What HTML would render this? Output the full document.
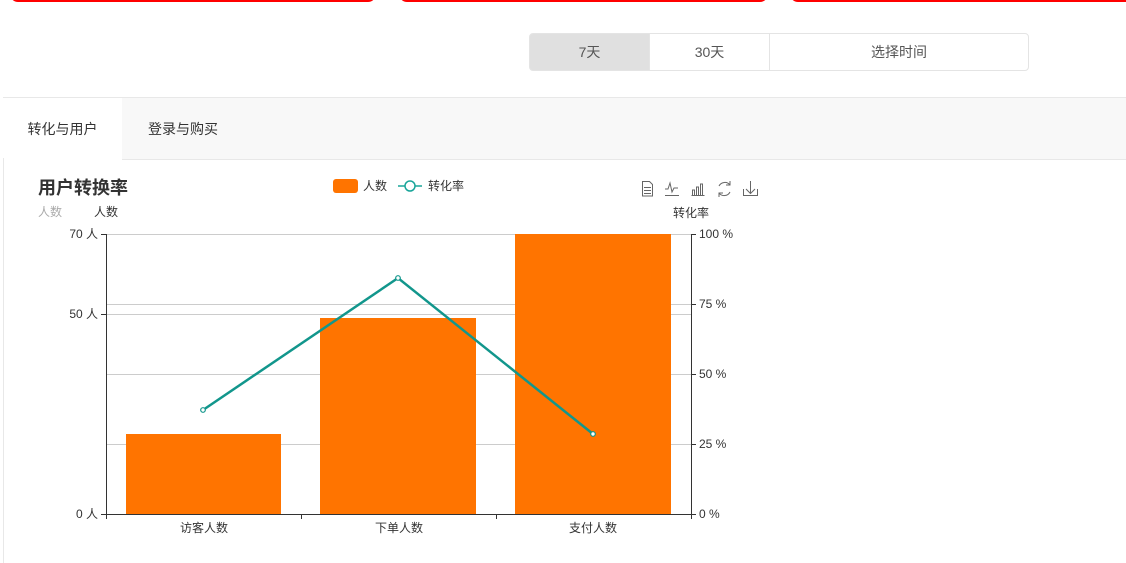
<!DOCTYPE html>
<html><head><meta charset="utf-8"><style>
body{margin:0;width:1126px;height:563px;overflow:hidden;background:#fff;font-family:"Liberation Sans","Noto Sans CJK SC",sans-serif;position:relative}
.card{position:absolute;top:-10px;height:12px;border-bottom:3px solid #f00;border-radius:0 0 8px 8px;box-sizing:border-box}
.seg{position:absolute;top:33px;height:38px;border:1px solid #e4e4e4;box-sizing:border-box;font-size:14px;color:#555;text-align:center;line-height:36px}
.tabs{position:absolute;left:3px;top:97px;right:0;height:61px;background:#f8f8f8;border-top:1px solid #e8e8e8;border-bottom:1px solid #e8e8e8}
.t{position:absolute;top:0;height:61px;line-height:63px;font-size:14px;color:#333;text-align:center}
svg text{font-family:"Liberation Sans","Noto Sans CJK SC",sans-serif}
</style></head><body>
<div class="card" style="left:10px;width:366px"></div>
<div class="card" style="left:399px;width:369px"></div>
<div class="card" style="left:790px;width:346px"></div>
<div class="seg" style="left:529px;width:121px;background:#e0e0e0;border-radius:4px 0 0 4px">7天</div>
<div class="seg" style="left:649px;width:121px">30天</div>
<div class="seg" style="left:769px;width:260px;border-radius:0 4px 4px 0">选择时间</div>
<div class="tabs">
<div class="t" style="left:0;width:119px;background:#fff;height:62px">转化与用户</div>
<div class="t" style="left:120px;width:120px">登录与购买</div>
</div>
<div style="position:absolute;left:3px;top:158px;width:1px;height:405px;background:#e8e8e8"></div>
<svg width="1126" height="563" style="position:absolute;left:0;top:0">
<text x="38" y="194" font-size="18" font-weight="bold" fill="#333">用户转换率</text>
<text x="38" y="216" font-size="12" fill="#aaa">人数</text>
<text x="94" y="216" font-size="12" fill="#333">人数</text>
<text x="673" y="217" font-size="12" fill="#333">转化率</text>
<rect x="333" y="179" width="25" height="14" rx="3" fill="#ff7400"/>
<text x="363" y="190" font-size="12" fill="#333">人数</text>
<line x1="398" y1="186" x2="422" y2="186" stroke="#1aa59a" stroke-width="1.5"/>
<circle cx="410" cy="186" r="5" fill="#fff" stroke="#1aa59a" stroke-width="1.5"/>
<text x="428" y="190" font-size="12" fill="#333">转化率</text>
<g stroke="#666" fill="none" stroke-width="1">
<path d="M642.5 181.5h7l3 3v11.5h-10z M644 187.5h7 M644 190.5h7 M644 193.5h7"/>
<path d="M665 189h3l2-6 2 9 2-4h4 M665 195.5h14"/>
<path d="M691.5 195.5h13 M692.5 195v-5h2v5 M696.5 195v-8h2v8 M700.5 195v-11h2v11"/>
<path d="M730 185a6.5 6.5 0 0 0-11 1 M719 193a6.5 6.5 0 0 0 11-1 M730 181v4h-4 M719 197v-4h4"/>
<path d="M743.5 189v6.5h14v-6.5 M750.5 181v12 M746 189l4.5 4.5 4.5-4.5"/>
</g>
<g stroke="#ccc" stroke-width="1">
<line x1="106" y1="234.5" x2="691" y2="234.5"/>
<line x1="106" y1="304.5" x2="691" y2="304.5"/>
<line x1="106" y1="314.5" x2="691" y2="314.5"/>
<line x1="106" y1="374.5" x2="691" y2="374.5"/>
<line x1="106" y1="444.5" x2="691" y2="444.5"/>
</g>
<rect x="126" y="434" width="155" height="80" fill="#ff7400"/>
<rect x="320" y="318" width="156" height="196" fill="#ff7400"/>
<rect x="515" y="234" width="156" height="280" fill="#ff7400"/>
<g stroke="#333" stroke-width="1" fill="none">
<path d="M106.5 234v280.5H691.5V234"/>
<path d="M101 234.5h5 M101 314.5h5 M101 514.5h5 M691 234.5h5 M691 304.5h5 M691 374.5h5 M691 444.5h5 M691 514.5h5 M106.5 514v5 M301.5 514v5 M496.5 514v5 M691.5 514v5"/>
</g>
<polyline points="203,410 398,278 593,434" fill="none" stroke="#12968c" stroke-width="2.5"/>
<g fill="#fff" stroke="#12968c" stroke-width="1.2">
<circle cx="203" cy="410" r="2.3"/><circle cx="398" cy="278" r="2.3"/><circle cx="593" cy="434" r="2.3"/>
</g>
<g font-size="12" fill="#333" text-anchor="end">
<text x="98" y="238">70 人</text><text x="98" y="318">50 人</text><text x="98" y="518">0 人</text>
</g>
<g font-size="12" fill="#333">
<text x="699" y="238">100 %</text><text x="699" y="308">75 %</text><text x="699" y="378">50 %</text><text x="699" y="448">25 %</text><text x="699" y="518">0 %</text>
</g>
<g font-size="12" fill="#333" text-anchor="middle">
<text x="204" y="532">访客人数</text><text x="399" y="532">下单人数</text><text x="593" y="532">支付人数</text>
</g>
</svg>
</body></html>
